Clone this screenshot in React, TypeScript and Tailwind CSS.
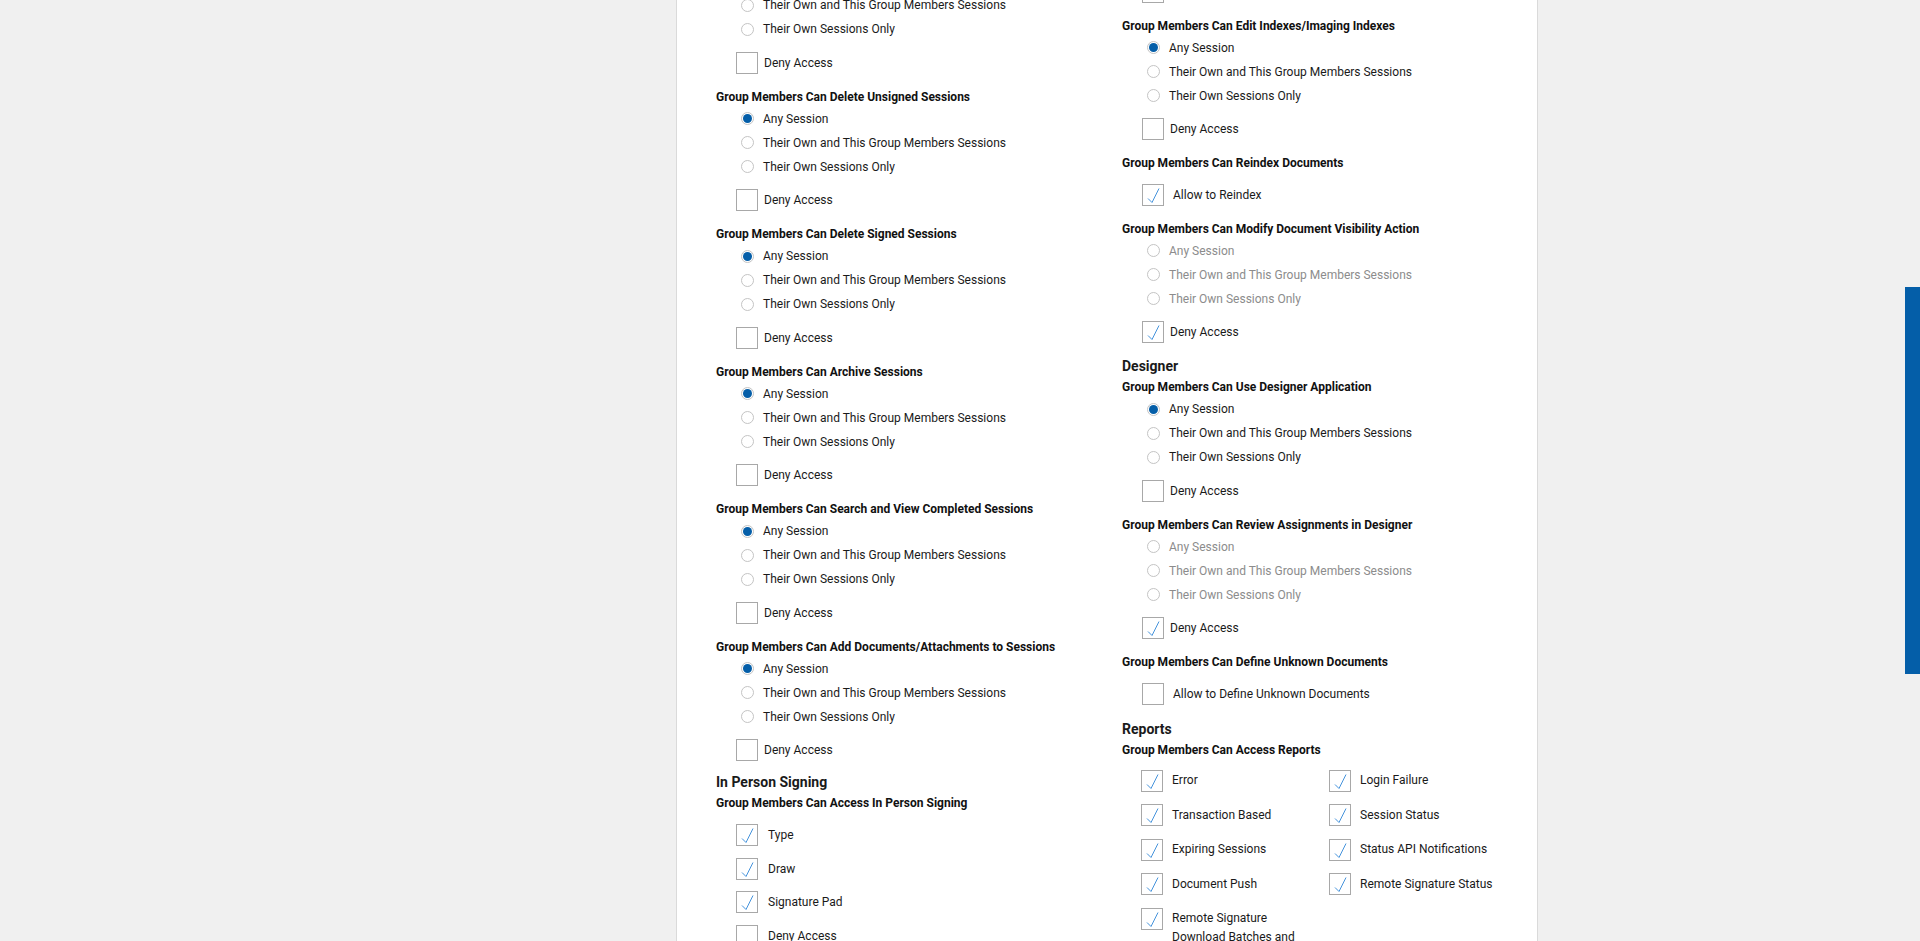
import React from "react";

const OPTIONS = ["Any Session", "Their Own and This Group Members Sessions", "Their Own Sessions Only"];

function Heading({ children }: { children: React.ReactNode }) {
  return <div className="h-[19px] text-[12px] leading-[19px] font-bold text-[#111] whitespace-nowrap">{children}</div>;
}

function Section({ children, shift }: { children: React.ReactNode; shift?: "sm" | "md" }) {
  return (
    <div
      className={`h-[20px] text-[14px] leading-[20px] font-bold text-[#1a1a1a] mb-[2px] ${
        shift === "md" ? "-mt-[3px]" : shift === "sm" ? "-mt-[1px]" : ""
      }`}
    >
      {children}
    </div>
  );
}

function Box({ checked }: { checked?: boolean }) {
  return (
    <span className="block w-[22px] h-[22px] shrink-0 border border-[#a8a8a8] bg-white">
      {checked && (
        <svg width="20" height="20" viewBox="0 0 20 20" className="block">
          <path d="M5 13.5 L9 17.5 L16 3.5" fill="none" stroke="#4593dc" strokeWidth="1" />
        </svg>
      )}
    </span>
  );
}

function Radio({ label, checked, disabled }: { label: string; checked?: boolean; disabled?: boolean }) {
  return (
    <div className="flex items-center h-6 pl-[25px]">
      <span className="block w-[13px] h-[13px] rounded-full border border-[#c4c4c4] bg-white p-[1px] shrink-0">
        {checked && <span className="block w-full h-full rounded-full bg-[#045ea8]" />}
      </span>
      <span className={`ml-[9px] text-[12px] whitespace-nowrap ${disabled ? "text-[#8c8c8c]" : "text-[#1a1a1a]"}`}>
        {label}
      </span>
    </div>
  );
}

function RadioGroup({
  title,
  value,
  disabled,
  deny,
}: {
  title: string;
  value: number | null;
  disabled?: boolean;
  deny?: boolean;
}) {
  return (
    <div className="mb-[14px]">
      <Heading>{title}</Heading>
      {OPTIONS.map((o, i) => (
        <Radio key={o} label={o} checked={value === i} disabled={disabled} />
      ))}
      <div className="flex items-center pl-[20px] mt-[10.5px]">
        <Box checked={deny} />
        <span className="ml-[6px] text-[12px] text-[#1a1a1a]">Deny Access</span>
      </div>
    </div>
  );
}

function SingleCheck({ title, label, checked }: { title: string; label: string; checked?: boolean }) {
  return (
    <div className="mb-[14px]">
      <Heading>{title}</Heading>
      <div className="flex items-center pl-[20px] mt-[10.5px]">
        <Box checked={checked} />
        <span className="ml-[9px] text-[12px] text-[#1a1a1a] whitespace-nowrap">{label}</span>
      </div>
    </div>
  );
}

const REPORTS = [
  "Error",
  "Login Failure",
  "Transaction Based",
  "Session Status",
  "Expiring Sessions",
  "Status API Notifications",
  "Document Push",
  "Remote Signature Status",
  "Remote Signature Download Batches and Documents",
];

export default function App() {
  return (
    <div className="h-[941px] overflow-hidden bg-[#f0f0f0] font-['Roboto',sans-serif]">
      <div className="ml-[676px] w-[862px] h-full overflow-hidden bg-white border-x border-[#dadada]">
        <div className="-mt-[50px] grid grid-cols-[406px_1fr] pl-[39px]">
          {/* left column */}
          <div>
            <RadioGroup title="Group Members Can Edit Sessions" value={0} />
            <RadioGroup title="Group Members Can Delete Unsigned Sessions" value={0} />
            <RadioGroup title="Group Members Can Delete Signed Sessions" value={0} />
            <RadioGroup title="Group Members Can Archive Sessions" value={0} />
            <RadioGroup title="Group Members Can Search and View Completed Sessions" value={0} />
            <RadioGroup title="Group Members Can Add Documents/Attachments to Sessions" value={0} />

            <Section shift="md">In Person Signing</Section>
            <Heading>Group Members Can Access In Person Signing</Heading>
            <div className="flex flex-col gap-[11.5px] mt-[11px] pl-[20px]">
              {[
                ["Type", true],
                ["Draw", true],
                ["Signature Pad", true],
                ["Deny Access", false],
              ].map(([l, c]) => (
                <div key={l as string} className="flex items-center">
                  <Box checked={c as boolean} />
                  <span className="ml-[10px] text-[12px] text-[#1a1a1a]">{l}</span>
                </div>
              ))}
            </div>
          </div>

          {/* right column */}
          <div className="pt-[1px]">
            <SingleCheck title="Group Members Can Access Imaging" label="Allow Imaging Access" />
            <RadioGroup title="Group Members Can Edit Indexes/Imaging Indexes" value={0} />
            <SingleCheck title="Group Members Can Reindex Documents" label="Allow to Reindex" checked />
            <RadioGroup title="Group Members Can Modify Document Visibility Action" value={null} disabled deny />

            <Section shift="sm">Designer</Section>
            <RadioGroup title="Group Members Can Use Designer Application" value={0} />
            <RadioGroup title="Group Members Can Review Assignments in Designer" value={null} disabled deny />
            <SingleCheck title="Group Members Can Define Unknown Documents" label="Allow to Define Unknown Documents" />

            <Section>Reports</Section>
            <Heading>Group Members Can Access Reports</Heading>
            <div className="grid grid-cols-[188px_188px] gap-y-[12.5px] mt-[10px] pl-[19px]">
              {REPORTS.map((r) => (
                <div key={r} className="flex items-start">
                  <Box checked />
                  <span className="ml-[9px] pt-[1.5px] w-[140px] text-[12px] leading-[19px] text-[#1a1a1a]">{r}</span>
                </div>
              ))}
            </div>
          </div>
        </div>
      </div>
      <div className="fixed right-0 top-[287px] w-[15px] h-[387px] bg-[#045ea8]" />
    </div>
  );
}
